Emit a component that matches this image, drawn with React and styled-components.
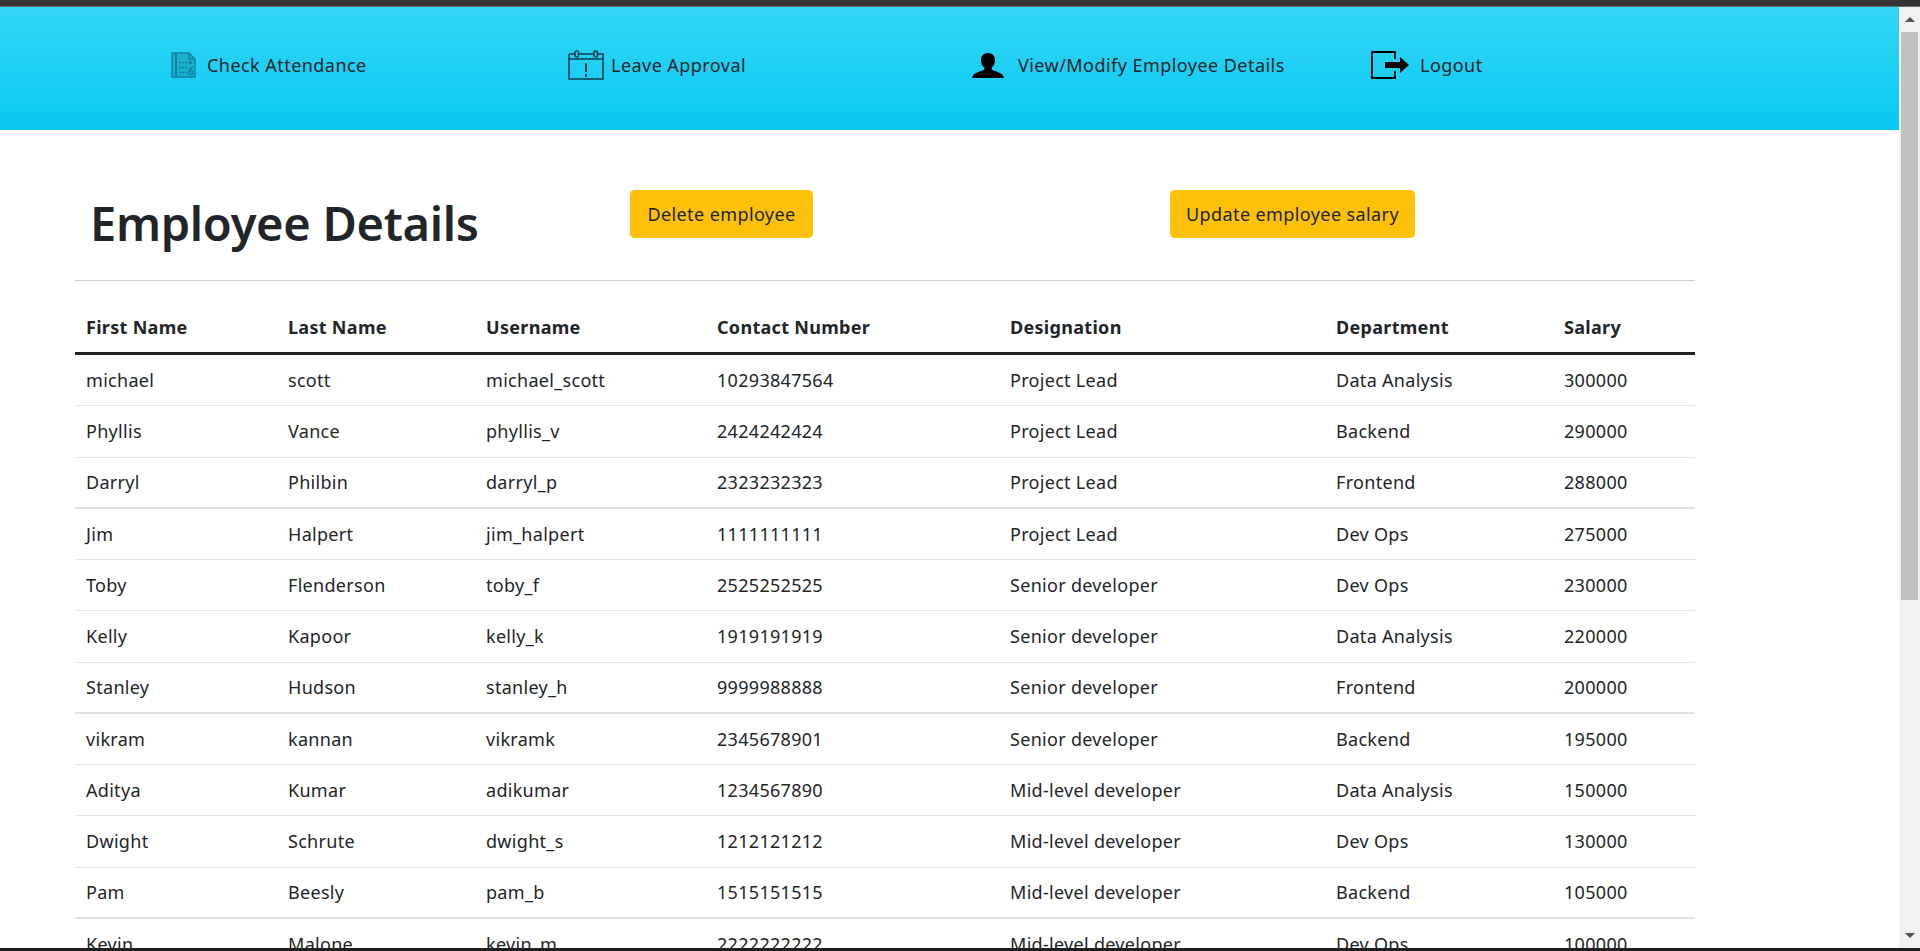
import styled, { createGlobalStyle } from 'styled-components';

const GlobalStyle = createGlobalStyle`
    html, body {
        margin: 0;
        height: 100%;
        overflow: hidden;
        background: #fff;
    }
    body {
        font-family: "Noto Sans", "Open Sans", "Liberation Sans", sans-serif;
        font-size: 18px;
        letter-spacing: 0.3px;
        color: #212529;
    }
`;

const Shell = styled.div`
    height: 951px;
    display: flex;
    flex-direction: column;
    overflow: hidden;
`;

const TopEdge = styled.div`
    height: 6px;
    flex: none;
    background: #333335;
    border-bottom: 1px solid #6b6b6b;
`;

const BottomEdge = styled.div`
    height: 3px;
    flex: none;
    background: #1f1f21;
`;

const Viewport = styled.div`
    flex: 1;
    min-height: 0;
    display: flex;
`;

const Page = styled.div`
    flex: 1;
    min-width: 0;
    overflow: hidden;
`;

const Scrollbar = styled.div`
    width: 21px;
    flex: none;
    background: #f1f1f1;
    display: flex;
    flex-direction: column;
    align-items: center;
`;

const ScrollArrow = styled.div`
    height: 25px;
    flex: none;
    display: flex;
    align-items: center;
    justify-content: center;
    &::before {
        content: '';
        border-left: 5px solid transparent;
        border-right: 5px solid transparent;
        ${(p) => (p.$down ? 'border-top: 5px solid #505050;' : 'border-bottom: 5px solid #505050;')}
    }
`;

const ScrollThumb = styled.div`
    width: 17px;
    height: 568px;
    flex: none;
    background: #c1c1c1;
`;

const ScrollTrack = styled.div`
    flex: 1;
`;

const Header = styled.header`
    height: 123px;
    box-sizing: border-box;
    padding: 39px 0 0 170px;
    background: linear-gradient(#33d6f5, #0ac8f2);
`;

const Nav = styled.nav`
    display: grid;
    grid-template-columns: 398px 404px 399px 200px;
`;

const NavItem = styled.a`
    display: flex;
    align-items: center;
    height: 38px;
    gap: ${(p) => p.$gap}px;
    letter-spacing: 0.45px;
    color: #212529;
`;

const Content = styled.main`
    width: 1620px;
    margin-left: 75px;
`;

const TitleRow = styled.div`
    height: 151px;
    box-sizing: border-box;
    padding-top: 60px;
    display: grid;
    grid-template-columns: 555px 540px auto;
    align-items: start;
    border-bottom: 1px solid #cfcfcf;
`;

const Title = styled.h1`
    margin: 0 0 0 15px;
    font-size: 47px;
    font-weight: 600;
    letter-spacing: -0.3px;
    line-height: 66px;
    color: #212529;
`;

const ActionButton = styled.button`
    justify-self: start;
    height: 48px;
    width: ${(p) => p.$width}px;
    padding: 0;
    font: inherit;
    letter-spacing: 0.4px;
    color: #212529;
    background: #ffc107;
    border: 1px solid #ffc107;
    border-radius: 4.4px;
`;

const Table = styled.table`
    width: 1620px;
    table-layout: fixed;
    border-collapse: separate;
    border-spacing: 0;
    margin-top: 21px;
    font-size: 18px;
`;

const Th = styled.th`
    box-sizing: border-box;
    height: 53px;
    padding: 0 13px;
    text-align: left;
    font-weight: 700;
    border-bottom: 3px solid #212529;
    &:first-child {
        padding-left: 11px;
    }
`;

const Td = styled.td`
    box-sizing: border-box;
    height: 51.25px;
    padding: 0 13px;
    border-bottom: ${(p) => (p.$thick ? '2px solid #dee2e6' : '1px solid #e4e7ea')};
    &:first-child {
        padding-left: 11px;
    }
`;

const FileIcon = () => (
    <svg width="27" height="28" viewBox="0 0 27 28" fill="none" stroke="#12819f" strokeWidth="1.4">
        <path d="M2 2h17l6 6v18H2z" fill="#1cb0d0" />
        <path d="M6 2v24" strokeWidth="2" />
        <path d="M19 2v6h6" />
        <path d="M9 11.500h8M9 16.500h8M9 21.500h8" strokeDasharray="2 1" />
        <path d="M19 10l3 3M22 10l-3 3M19 17l1.500 1.500 2.500-3" />
        <rect x="19" y="20" width="3.500" height="3.500" />
    </svg>
);

const CalendarIcon = () => (
    <svg width="36" height="30" viewBox="0 0 36 30" fill="none" stroke="#0a3e50" strokeWidth="1.6">
        <path d="M1 4h35M1 4v25h34V4M1 9h34" />
        <rect x="7" y="1" width="3.500" height="6" rx="1.500" fill="#29cdf0" />
        <rect x="26" y="1" width="3.500" height="6" rx="1.500" fill="#29cdf0" />
        <path d="M18 13v9M18 24v3" strokeWidth="2" />
    </svg>
);

const UserIcon = () => (
    <svg width="32" height="25" viewBox="0 0 32 25" fill="#000">
        <path d="M16 0c4.500 0 7 3.200 7 7 0 3.500-1.500 6-3.200 7.500v2.300c1.500 1.300 11.200 2.300 12.200 8.200H0c1-5.900 10.700-6.900 12.200-8.200v-2.300C10.500 13 9 10.500 9 7c0-3.800 2.500-7 7-7z" />
    </svg>
);

const LogoutIcon = () => (
    <svg width="40" height="28" viewBox="0 0 40 28" fill="none" stroke="#000" strokeWidth="1.800">
        <path d="M24 8V1H1v26h23v-7" />
        <path d="M14 11h15V6l9 8-9 8v-5H14z" fill="#000" stroke="none" />
    </svg>
);

const columns = ['First Name', 'Last Name', 'Username', 'Contact Number', 'Designation', 'Department', 'Salary'];
const colWidths = [200, 198, 231, 293, 326, 228, 144];

const employees = [
    ['michael', 'scott', 'michael_scott', '10293847564', 'Project Lead', 'Data Analysis', '300000'],
    ['Phyllis', 'Vance', 'phyllis_v', '2424242424', 'Project Lead', 'Backend', '290000'],
    ['Darryl', 'Philbin', 'darryl_p', '2323232323', 'Project Lead', 'Frontend', '288000'],
    ['Jim', 'Halpert', 'jim_halpert', '1111111111', 'Project Lead', 'Dev Ops', '275000'],
    ['Toby', 'Flenderson', 'toby_f', '2525252525', 'Senior developer', 'Dev Ops', '230000'],
    ['Kelly', 'Kapoor', 'kelly_k', '1919191919', 'Senior developer', 'Data Analysis', '220000'],
    ['Stanley', 'Hudson', 'stanley_h', '9999988888', 'Senior developer', 'Frontend', '200000'],
    ['vikram', 'kannan', 'vikramk', '2345678901', 'Senior developer', 'Backend', '195000'],
    ['Aditya', 'Kumar', 'adikumar', '1234567890', 'Mid-level developer', 'Data Analysis', '150000'],
    ['Dwight', 'Schrute', 'dwight_s', '1212121212', 'Mid-level developer', 'Dev Ops', '130000'],
    ['Pam', 'Beesly', 'pam_b', '1515151515', 'Mid-level developer', 'Backend', '105000'],
    ['Kevin', 'Malone', 'kevin_m', '2222222222', 'Mid-level developer', 'Dev Ops', '100000'],
];

const App = () => (
    <Shell>
        <GlobalStyle />
        <TopEdge />
        <Viewport>
            <Page>
                <Header>
                    <Nav>
                        <NavItem $gap={10}><FileIcon />Check Attendance</NavItem>
                        <NavItem $gap={7}><CalendarIcon />Leave Approval</NavItem>
                        <NavItem $gap={14}><UserIcon />View/Modify Employee Details</NavItem>
                        <NavItem $gap={9}><LogoutIcon />Logout</NavItem>
                    </Nav>
                </Header>
                <Content>
                    <TitleRow>
                        <Title>Employee Details</Title>
                        <ActionButton $width={183}>Delete employee</ActionButton>
                        <ActionButton $width={245}>Update employee salary</ActionButton>
                    </TitleRow>
                    <Table>
                        <colgroup>
                            {colWidths.map((w) => <col key={w} width={w} />)}
                        </colgroup>
                        <thead>
                            <tr>
                                {columns.map((c) => <Th key={c}>{c}</Th>)}
                            </tr>
                        </thead>
                        <tbody>
                            {employees.map((row, i) => (
                                <tr key={row[2]}>
                                    {row.map((cell, j) => <Td key={j} $thick={i % 4 === 2}>{cell}</Td>)}
                                </tr>
                            ))}
                        </tbody>
                    </Table>
                </Content>
            </Page>
            <Scrollbar>
                <ScrollArrow />
                <ScrollThumb />
                <ScrollTrack />
                <ScrollArrow $down />
            </Scrollbar>
        </Viewport>
        <BottomEdge />
    </Shell>
);

export default App;
